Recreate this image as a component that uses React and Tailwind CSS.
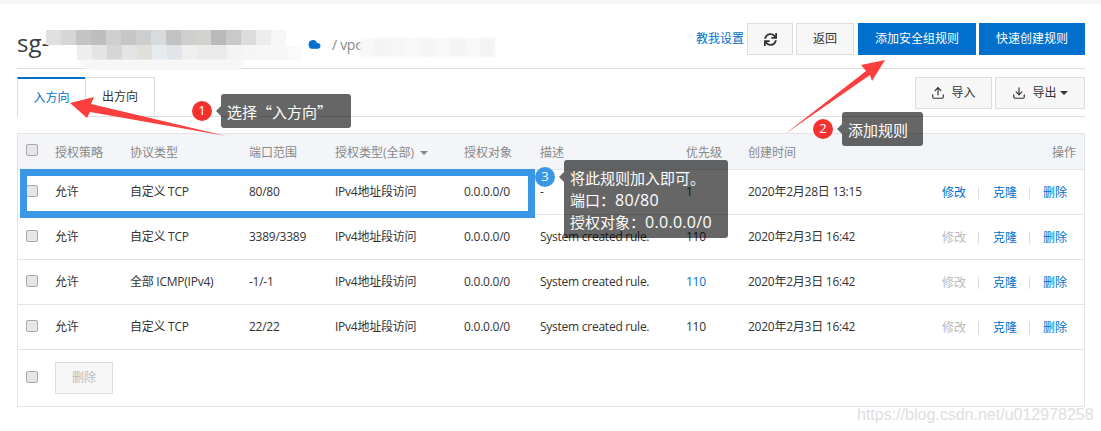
import React from "react";
import { Upload, Download, Cloud } from "lucide-react";
import { FaSync } from "react-icons/fa";

const topTiles = ["bg-[#e0e0e0]", "bg-[#d6d6d6]", "bg-[#c4c4c4]", "bg-[#bebec0]", "bg-[#d0cece]", "bg-[#c6c6c6]", "bg-[#cecece]", "bg-[#d8dbde]", "bg-[#c2c2c2]", "bg-[#cecece]", "bg-[#d2d2ce]", "bg-[#b8baba]", "bg-[#c9c9c9]", "bg-[#dcdcdc]", "bg-[#ececec]", "bg-[#f6f6f6]"];
const lowTiles = ["bg-[#eeeeee]", "bg-[#e4e4e4]", "bg-[#d6d6d6]", "bg-[#e4e4e4]", "bg-[#e0e0da]", "bg-[#e6ecee]", "bg-[#e1e4e8]", "bg-[#efefef]", "bg-[#ebebeb]", "bg-[#eaeae8]", "bg-[#f3f3f3]", "bg-[#f5f5f5]", "bg-[#f7f7f7]", "bg-[#f7f7f7]", "bg-[#fafafa]"];
const vpcTiles = ["bg-[#f8f8f8]", "bg-[#f4f4f4]", "bg-[#f6f6f6]", "bg-[#f8f8f8]", "bg-[#f5f5f5]", "bg-[#f8f8f8]", "bg-[#f4f4f4]", "bg-[#f8f8f8]", "bg-[#f3f3f3]"];

const rows = [
  { proto: "自定义 TCP", port: "80/80", desc: "-", prio: "1", time: "2020年2月28日 13:15", editable: true },
  { proto: "自定义 TCP", port: "3389/3389", desc: "System created rule.", prio: "110", time: "2020年2月3日 16:42" },
  { proto: "全部 ICMP(IPv4)", port: "-1/-1", desc: "System created rule.", prio: "110", time: "2020年2月3日 16:42", blue: true },
  { proto: "自定义 TCP", port: "22/22", desc: "System created rule.", prio: "110", time: "2020年2月3日 16:42" },
];

const Check = () => (
  <span className="block w-[12px] h-[12px] rounded-[2px] border border-[#a9a9a9] bg-[#e6e6e6]"></span>
);

const Badge = ({ n, color, className }) => (
  <span className={`absolute flex items-center justify-center w-[20px] h-[20px] rounded-full text-white text-[13px] ${color} ${className}`}>{n}</span>
);

const Tip = ({ className, children }) => (
  <div className={`absolute rounded-[3px] bg-black/60 text-white text-[15px] leading-[22px] pl-[6px] pt-[7px] ${className}`}>
    <span className="absolute -left-[5px] top-[12px] w-0 h-0 border-y-[5px] border-y-transparent border-r-[5px] border-r-black/60"></span>
    {children}
  </div>
);

export default function App() {
  return (
    <div className="relative w-[1101px] h-[431px] overflow-hidden bg-white text-[12px] text-[#333333] font-['Open_Sans','Noto_Sans_CJK_SC',sans-serif]">
      <div className="h-[4px] bg-[#f6f6f6]"></div>

      <div className="ml-[17px] mr-[16px]">
        {/* Title bar */}
        <div className="h-[65px] border-b border-[#dddddd] flex items-start justify-between">
          <div className="flex items-center mt-[23px] h-[32px]">
            <span className="text-[24px] text-[#373d41] w-[291px]">sg-</span>
            <Cloud size={13} className="text-[#0070cc] fill-[#0070cc] mr-[11px] mt-[2px]" />
            <span className="text-[14px] text-[#888888] mt-[2px] tracking-[-0.3px]">/ vpc</span>
          </div>
          <div className="flex items-center mt-[19px]">
            <span className="text-[#0070cc] mr-[3px]">教我设置</span>
            <button className="w-[46px] h-[32px] flex items-center justify-center border border-[#dddddd] bg-[#f7f7f7] mr-[3px]">
              <FaSync size={13} className="text-[#333333]" />
            </button>
            <button className="w-[58px] h-[32px] border border-[#dddddd] bg-[#f7f7f7] mr-[4px]">返回</button>
            <button className="w-[118px] h-[32px] bg-[#0070cc] text-white mr-[3px]">添加安全组规则</button>
            <button className="w-[106px] h-[32px] bg-[#0070cc] text-white">快速创建规则</button>
          </div>
        </div>

        {/* Tabs */}
        <div className="h-[40px] mt-[8px] border-b border-[#dddddd] flex items-start justify-between">
          <div className="flex h-[40px]">
            <div className="w-[68px] h-[40px] flex items-center justify-center border-t-2 border-t-[#0070cc] border-l border-[#dddddd] bg-white text-[#0070cc]">入方向</div>
            <div className="w-[70px] h-[39px] flex items-center justify-center border border-b-0 border-[#dddddd]">出方向</div>
          </div>
          <div className="flex">
            <button className="w-[77px] h-[32px] flex items-center justify-center gap-[6px] border border-[#dddddd] bg-[#f7f7f7] mr-[3px]">
              <Upload size={14} />导入
            </button>
            <button className="w-[90px] h-[32px] flex items-center justify-center gap-[6px] border border-[#dddddd] bg-[#f7f7f7]">
              <Download size={14} />
              <span className="flex items-center gap-[3px]">导出<span className="w-0 h-0 border-x-[4px] border-x-transparent border-t-[4px] border-t-[#333333]"></span></span>
            </button>
          </div>
        </div>

        {/* Table */}
        <div className="mt-[16px] h-[274px] border border-[#e1e4e8] flex flex-col">
          <div className="h-[36px] flex items-center bg-[#f3f5f9] text-[#888888] border-b border-[#e1e4e8]">
            <div className="w-[37px] pl-[8px] -mt-[3px]"><Check /></div>
            <div className="w-[75px] pt-[2px]">授权策略</div>
            <div className="w-[119px] pt-[2px]">协议类型</div>
            <div className="w-[86px] pt-[2px]">端口范围</div>
            <div className="w-[129px] pt-[2px] flex items-center gap-[6px]">授权类型(全部)<span className="w-0 h-0 border-x-[4px] border-x-transparent border-t-[4px] border-t-[#888888]"></span></div>
            <div className="w-[76px] pt-[2px]">授权对象</div>
            <div className="w-[146px] pt-[2px]">描述</div>
            <div className="w-[62px] pt-[2px]">优先级</div>
            <div className="flex-1 pt-[2px]">创建时间</div>
            <div className="pr-[8px] pt-[2px]">操作</div>
          </div>

          {rows.map((r, i) => (
            <div key={i} className="flex items-center h-[45px] border-b border-[#e1e4e8] tracking-[-0.25px]">
              <div className="w-[37px] pl-[8px] -mt-[3px]"><Check /></div>
              <div className="w-[75px]">允许</div>
              <div className="w-[119px]">{r.proto}</div>
              <div className="w-[86px]">{r.port}</div>
              <div className="w-[129px]">IPv4地址段访问</div>
              <div className="w-[76px]">0.0.0.0/0</div>
              <div className="w-[146px]">{r.desc}</div>
              <div className={`w-[62px] ${r.blue ? "text-[#0070cc]" : ""}`}>{r.prio}</div>
              <div className="w-[194px]">{r.time}</div>
              <div className="flex items-center pt-[2px] tracking-normal">
                <span className={`w-[24px] ${r.editable ? "text-[#0070cc]" : "text-[#bbbbbb]"}`}>修改</span>
                <span className="w-px h-[12px] bg-[#dddddd] ml-[12px] mr-[14px]"></span>
                <span className="w-[24px] text-[#0070cc]">克隆</span>
                <span className="w-px h-[12px] bg-[#dddddd] ml-[12px] mr-[13px]"></span>
                <span className="w-[24px] text-[#0070cc]">删除</span>
              </div>
            </div>
          ))}

          <div className="flex items-center h-[56px]">
            <div className="w-[37px] pl-[8px] -mt-[3px]"><Check /></div>
            <button className="w-[58px] h-[32px] border border-[#dddddd] bg-[#f7f7f7] text-[#bbbbbb] -mt-[1px]">删除</button>
          </div>
        </div>
      </div>

      {/* Redaction mosaic over the title */}
      <div className="absolute left-[46px] top-[30px] flex">
        {topTiles.map((c, i) => <span key={i} className={`w-[15px] h-[15px] ${c}`}></span>)}
      </div>
      <div className="absolute left-[77px] top-[45px] flex">
        {lowTiles.map((c, i) => <span key={i} className={`w-[15px] h-[15px] ${c}`}></span>)}
      </div>
      <div className="absolute left-[80px] top-[60px] w-[165px] h-[10px] rounded-b-full bg-[#f7f7f7] blur-[1px]"></div>
      <div className="absolute left-[360px] top-[38px] flex blur-[1px]">
        {vpcTiles.map((c, i) => <span key={i} className={`w-[15px] h-[19px] ${c}`}></span>)}
      </div>

      {/* Highlight box */}
      <div className="absolute left-[20px] top-[169px] w-[515px] h-[49px] border-[7px] border-[#3a97e6]"></div>

      {/* Red arrows */}
      <svg className="absolute left-0 top-0 pointer-events-none" width="1101" height="431">
        <polygon points="70,103 94,97 91,104 226,136 90,112 87,118" fill="#fb3e3e" />
        <polygon points="885,60 861,65 866,71 785,134 870,75 872,81" fill="#fb3e3e" />
      </svg>

      {/* Annotations */}
      <Badge n="1" color="bg-[#f5312f]" className="left-[192px] top-[101px]" />
      <Tip className="left-[221px] top-[94px] w-[130px] h-[34px]">选择<span className="font-['Noto_Sans_CJK_SC',sans-serif]">“入方向”</span></Tip>
      <Badge n="2" color="bg-[#f5312f]" className="left-[813px] top-[119px]" />
      <Tip className="left-[842px] top-[112px] w-[81px] h-[34px]">添加规则</Tip>
      <Badge n="3" color="bg-[#3a97e6]" className="left-[535px] top-[167px]" />
      <Tip className="left-[564px] top-[160px] w-[164px] h-[78px]">
        <div>将此规则加入即可。</div>
        <div>端口：<span className="text-[16px] tracking-[0.3px]">80/80</span></div>
        <div>授权对象：<span className="text-[16px] tracking-[0.3px]">0.0.0.0/0</span></div>
      </Tip>

      {/* Watermark */}
      <span className="absolute left-[857px] top-[403px] text-[16px] text-[#dedede] font-['Liberation_Sans',sans-serif]">https://blog.csdn.net/u012978258</span>
    </div>
  );
}
